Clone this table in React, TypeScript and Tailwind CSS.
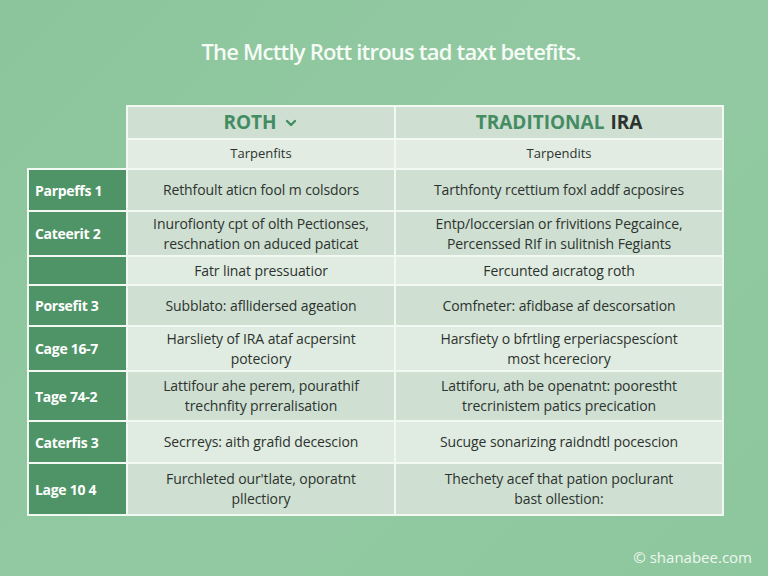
import { ChevronDown } from "lucide-react";

type Row = {
  label: string;
  roth: string[];
  trad: string[];
  h: string;
  light?: boolean;
};

const rows: Row[] = [
  { label: "Parpeffs 1", roth: ["Rethfoult aticn fool m colsdors"], trad: ["Tarthfonty rcettium foxl addf acposires"], h: "h-[40px]" },
  {
    label: "Cateerit 2",
    roth: ["Inurofionty cpt of olth Pectionses,", "reschnation on aduced paticat"],
    trad: ["Entp/loccersian or frivitions Pegcaince,", "Percenssed RIf in sulitnish Fegiants"],
    h: "h-[43px]",
  },
  { label: "", roth: ["Fatr linat pressuatior"], trad: ["Fercunted aıcratog roth"], h: "h-[27px]", light: true },
  { label: "Porsefit 3", roth: ["Subblato: afllidersed ageation"], trad: ["Comfneter: afidbase af descorsation"], h: "h-[39px]" },
  {
    label: "Cage 16-7",
    roth: ["Harsliety of IRA ataf acpersint", "poteciory"],
    trad: ["Harsfiety o bfrtling erperiacspescíont", "most hcereciory"],
    h: "h-[43px]",
    light: true,
  },
  {
    label: "Tage 74-2",
    roth: ["Lattifour ahe perem, pourathif", "trechnfity prreralisation"],
    trad: ["Lattiforu, ath be openatnt: poorestht", "trecrinistem patics precication"],
    h: "h-[48px]",
  },
  { label: "Caterfis 3", roth: ["Secrreys: aith grafid decescion"], trad: ["Sucuge sonarizing raidndtl pocescion"], h: "h-[40px]", light: true },
  {
    label: "Lage 10 4",
    roth: ["Furchleted our'tlate, oporatnt", "pllectiory"],
    trad: ["Thechety acef that pation poclurant", "bast ollestion:"],
    h: "h-[50px]",
  },
];

function Cell({ lines, light }: { lines: string[]; light?: boolean }) {
  return (
    <div
      className={`flex flex-col items-center justify-center text-center text-[14px] leading-[20px] tracking-[-0.1px] text-[#2c332e] ${
        light ? "bg-[#e0ebe1]" : "bg-[#cfdfd2]"
      }`}
    >
      {lines.map((l, i) => (
        <span key={i}>{l}</span>
      ))}
    </div>
  );
}

export default function App() {
  return (
    <div
      className="relative w-[768px] h-[576px] overflow-hidden bg-[linear-gradient(135deg,#8cc59c_0%,#92c9a2_50%,#8dc79d_100%)]"
      style={{ fontFamily: '"Open Sans", "Liberation Sans", sans-serif' }}
    >
      <div className="h-[105px] pt-[35px] text-center">
        <h1 className="pl-[14px] text-[22px] font-semibold tracking-[-0.8px] text-[#f6fbf6]">
          The Mcttly Rott itrous tad taxt betefits.
        </h1>
      </div>

      <div className="ml-[27px] w-[697px]">
        <div className="ml-[99px] grid grid-cols-[266px_326px] grid-rows-[31px_28px] gap-[2px] bg-[#f2f9f2] p-[2px] pb-0">
          <div className="flex items-center justify-center gap-[6px] bg-[#cfdfd2] text-[19px] font-bold text-[#448c62]">
            ROTH
            <ChevronDown className="size-[16px]" strokeWidth={3.5} />
          </div>
          <div className="flex items-center justify-center gap-[6px] bg-[#cfdfd2] text-[19px] font-bold">
            <span className="text-[#448c62]">TRADITIONAL</span>
            <span className="text-[#2c332e]">IRA</span>
          </div>
          <div className="flex items-center justify-center bg-[#e2ece3] text-[13px] text-[#2c332e]">Tarpenfits</div>
          <div className="flex items-center justify-center bg-[#e2ece3] text-[13px] text-[#2c332e]">Tarpendits</div>
        </div>

        <div className="grid grid-cols-[97px_266px_326px] gap-[2px] bg-[#f2f9f2] p-[2px]">
          {rows.map((r, i) => (
            <div key={i} className="contents">
              <div className={`${r.h} flex items-center bg-[#4f9467] pl-[6px] text-[14px] font-bold tracking-[-0.3px] text-white`}>
                {r.label}
              </div>
              <Cell lines={r.roth} light={r.light} />
              <Cell lines={r.trad} light={r.light} />
            </div>
          ))}
        </div>
      </div>

      <div className="mt-[30px] flex justify-end pr-[16px] text-[15px] text-[#eef7ef]">© shanabee.com</div>
    </div>
  );
}
